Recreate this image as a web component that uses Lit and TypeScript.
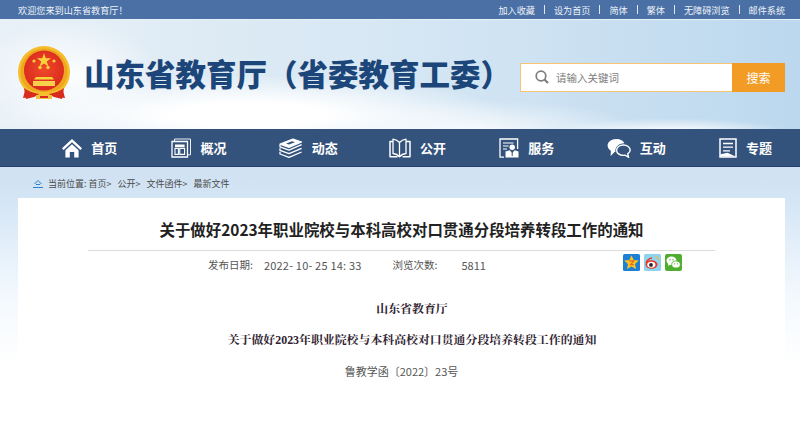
import { LitElement, html, css, svg } from "lit";
import { customElement } from "lit/decorators.js";

const navIcons = {
  home: svg`<svg width="20" height="20" viewBox="0 0 20 20"><path d="M10 1 0 10.2l1.6 1.700L10 4.200l8.400 7.700 1.600-1.700z" fill="#fff"/><path d="M3.400 12.200 10 6.200l6.600 6V19.500h-4.400v-5.400H7.800v5.400H3.400z" fill="#fff"/></svg>`,
  about: svg`<svg width="20" height="20" viewBox="0 0 20 20" fill="none" stroke="#fff"><path d="M1 3.500h15.500V19H1z" stroke-width="1.300"/><path d="M3.500 3V1h16v15.800h-2.600" stroke-width=".9"/><path d="M4 6.500h9.600v2.600H4z" fill="#fff" stroke="none"/><path d="M4 10.400h3.400v6H4zM8.800 10.400h4.800v6H8.800z" stroke-width="1.100"/></svg>`,
  news: svg`<svg width="24" height="20" viewBox="0 0 24 20" fill="none" stroke="#fff" stroke-width="1.300" stroke-linejoin="round"><path d="M1 6.200 14 1l8.600 3L10 9.300z" fill="#fff"/><path d="M1 6.600v2.200l9 3.300 12.600-5.400M1 10.200v2.200l9 3.300 12.600-5.400M1 13.800V16l9 3.300L22.600 14"/><path d="M7 5.500l6-2.300 3 1-6 2.400z" fill="#34537c" stroke="none"/></svg>`,
  open: svg`<svg width="22" height="20" viewBox="0 0 22 20" fill="none" stroke="#fff" stroke-linejoin="round"><path d="M10.500 4.500C9 2.800 6.500 1.500 4 1.200v14.300c2.500.3 5 1.500 6.500 3.200 1.500-1.700 4-2.900 6.500-3.200V1.200c-2.500.3-5 1.600-6.500 3.300zM10.500 4.500v14" stroke-width="1.300"/><path d="M4 3.500H1v15.200h7.500M17 3.500h4v15.200h-7.500" stroke-width="1.500"/></svg>`,
  service: svg`<svg width="20" height="20" viewBox="0 0 20 20" fill="none" stroke="#fff"><path d="M5 19.200H1V1h17.600v10" stroke-width="1.300"/><path d="M4 5h10.500M4 8h5.600M4 11h4" stroke-width="1.200"/><circle cx="13.200" cy="9.200" r="2.700" fill="#fff" stroke="none"/><path d="M6.500 19.500v-6l4.200-1.200 2.500 2.800 2.500-2.800 3.800 1.200v6z" fill="#fff" stroke="none"/><path d="M13.200 13.500v4.600" stroke="#34537c" stroke-width="1"/></svg>`,
  chat: svg`<svg width="24" height="20" viewBox="0 0 24 20"><path d="M9.200 1C4.200 1 .6 4 .6 7.600c0 2.200 1.300 4 3.300 5.200L3.600 18l4-4c.3.1.5 0 .8 0-.6-4.700 2.900-8.500 9-8.700C16.400 2.800 13.300 1 9.200 1z" fill="#fff"/><path d="M16.300 7c-3.800 0-6.700 2.300-6.700 5.200s2.900 5.200 6.700 5.200c.7 0 1.200 0 1.800-.2l3.400 2-.8-3.300c1.500-1 2.500-2.300 2.500-3.800C23.200 9.300 20.100 7 16.300 7z" fill="none" stroke="#fff" stroke-width="1.400"/></svg>`,
  topic: svg`<svg width="18" height="20" viewBox="0 0 18 20" fill="none" stroke="#fff"><path d="M1 1h16v18H1z" stroke-width="1.500"/><path d="M4 5.500h10M4 9.200h10M4 12.800h7" stroke-width="1.300"/><path d="M1.500 18.500v-2.300l7 -1.500 8 3.800z" fill="#fff" stroke="none"/></svg>`,
};

const emblem = svg`<svg width="52" height="56" viewBox="0 0 52 56">
  <defs><radialGradient id="g" cx=".5" cy=".45" r=".6"><stop offset="0" stop-color="#f04a2a"/><stop offset="1" stop-color="#d8261c"/></radialGradient></defs>
  <path d="M9 37 5 52l8-1 3-2h20l3 2 8 1-4-15z" fill="#d92a20"/>
  <circle cx="26" cy="26" r="26" fill="#f6bd2d"/>
  <circle cx="26" cy="26" r="23.500" fill="#eda81f"/>
  <circle cx="26" cy="24.500" r="20" fill="url(#g)"/>
  <path d="M26 7l1.700 5.200h5.400l-4.400 3.200 1.700 5.200-4.400-3.200-4.400 3.200 1.700-5.200-4.400-3.200h5.400z" fill="#f9d33c"/>
  <g fill="#f9d33c"><circle cx="16" cy="15" r="1.600"/><circle cx="36" cy="15" r="1.600"/><circle cx="22" cy="21.500" r="1.700"/><circle cx="30" cy="21.500" r="1.700"/></g>
  <path d="M18 31h16l2 2.500H16z" fill="#f9d33c"/><path d="M15 35h22v5H15z" fill="#f6d04a"/>
  <path d="M6 39c6 6 12 7 20 7s14-1 20-7v3c-6 5-12 7-20 7s-14-2-20-7z" fill="#f6bd2d"/>
  <path d="M6 42l2 11 8-2 5-3c-6-1-11-3-15-6zM46 42l-2 11-8-2-5-3c6-1 11-3 15-6z" fill="#d92a20"/>
  <path d="M18 49h16v4H18z" fill="#f3c23b"/><path d="M22 50h8v2h-8z" fill="#d92a20"/>
</svg>`;

const shareQ = svg`<svg width="17" height="17" viewBox="0 0 17 17"><rect width="17" height="17" rx="1.500" fill="#1c81d6"/><path d="M8.500 1.200l2.200 4.700 5.100.6-3.800 3.500 1 5-4.500-2.500-4.500 2.500 1-5L1.200 6.500l5.100-.6z" fill="#fbc31d"/><path d="M6 6.800h4.800L7.600 10.600h3.200" fill="none" stroke="#e8662a" stroke-width="1.200"/></svg>`;
const shareW = svg`<svg width="17" height="17" viewBox="0 0 17 17"><rect width="17" height="17" rx="1.500" fill="#8fd4ef"/><path d="M11 2.500c2.300 0 3.800 1.700 3.500 4" fill="none" stroke="#f7b63e" stroke-width="1.200"/><ellipse cx="7.500" cy="10.500" rx="6" ry="4.300" fill="#e9342b"/><ellipse cx="7.300" cy="10.800" rx="4.100" ry="3" fill="#fff"/><circle cx="7" cy="10.900" r="1.900" fill="#222"/><path d="M2 9c1-3 4-5 6-5" stroke="#e9342b" stroke-width="1.400" fill="none"/></svg>`;
const shareC = svg`<svg width="17" height="17" viewBox="0 0 17 17"><rect width="17" height="17" rx="2" fill="#4fae2e"/><ellipse cx="6.500" cy="6.700" rx="5" ry="4.200" fill="#fff"/><path d="M3.500 9.500 3 12l2.600-1.500z" fill="#fff"/><ellipse cx="11" cy="10.500" rx="4.300" ry="3.500" fill="#fff" stroke="#4fae2e" stroke-width=".8"/><circle cx="5" cy="5.700" r=".7" fill="#4fae2e"/><circle cx="8" cy="5.700" r=".7" fill="#4fae2e"/><circle cx="9.600" cy="9.800" r=".6" fill="#4fae2e"/><circle cx="12.400" cy="9.800" r=".6" fill="#4fae2e"/></svg>`;

const nav: [keyof typeof navIcons, string][] = [
  ["home", "首页"], ["about", "概况"], ["news", "动态"], ["open", "公开"],
  ["service", "服务"], ["chat", "互动"], ["topic", "专题"],
];
const links = ["加入收藏", "设为首页", "简体", "繁体", "无障碍浏览", "邮件系统"];

@customElement("app-root")
export class AppRoot extends LitElement {
  static styles = css`
    :host { display: block; height: 421px; overflow: hidden; font-family: "Noto Sans CJK SC", sans-serif; background: linear-gradient(#cfe1f2 167px, #d4e5f5 198px, #e8f2fb 260px, #f4f9fe 300px, #fff 365px); }
    .top { height: 19px; background: #4a70a5; border-bottom: 1px solid #e8f0f7; box-sizing: content-box; display: flex; justify-content: space-between; align-items: center; padding: 0 15px 0 18px; color: #eef3f9; font-size: 9.150px; }
    .links { display: flex; align-items: center; gap: 9px; }
    .sep { width: 1px; height: 9px; background: #dfe7f2; }
    .head { height: 109px; display: flex; align-items: center; padding: 0 15px 0 18px; box-sizing: border-box;
      background:
        radial-gradient(ellipse 90px 55px at 70px 55px, rgba(255,255,255,.9), transparent),
        radial-gradient(ellipse 260px 40px at 250px 95px, #fff 30%, transparent),
        radial-gradient(ellipse 120px 14px at 670px 112px, #fff, transparent),
        radial-gradient(ellipse 160px 30px at 480px 110px, rgba(255,255,255,.8), transparent),
        linear-gradient(90deg, #e9f1f8 0%, #dceaf4 30%, #d6e7f4 50%, #bcd8ee 100%);
    }
    .logo { width: 52px; height: 56px; margin-top: -1px; }
    h1 { margin: 0 0 3px 14px; font-size: 30.500px; line-height: 40px; font-weight: 900; color: #1c4679; white-space: nowrap; flex: 1; }
    .search { width: 265px; height: 29px; box-sizing: border-box; border: 1px solid #f7c473; display: flex; background: #fff; margin-top: 5px; flex: none; }
    .field { flex: 1; display: flex; align-items: center; gap: 7px; padding-left: 14px; color: #7d7d7d; font-size: 10.500px; }
    .btn { width: 53px; background: #f29c25; color: #fff; font-size: 12px; display: flex; align-items: center; justify-content: center; margin: -1px -1px -1px 0; height: 29px; }
    nav { height: 38px; background: #34537c; border-bottom: 1px solid #22406a; box-sizing: border-box; display: grid; grid-template-columns: repeat(7, 109.300px); padding-left: 35px; }
    .item { display: flex; align-items: center; justify-content: center; gap: 9px; color: #fff; font-size: 13px; font-weight: 700; }
    .item svg { display: block; }
    .crumb { height: 31px; display: flex; align-items: center; padding: 2px 0 0 33px; box-sizing: border-box; gap: 5px; font-size: 9px; color: #4a4a4a; }
    .crumb span { margin-right: 1px; }
    .card { margin: 0 15px 0 18px; background: #fff; height: 223px; display: flex; flex-direction: column; align-items: center; }
    h2 { margin: 0; padding-top: 20px; height: 53px; box-sizing: border-box; width: 627px; border-bottom: 1px solid #dcdcdc; text-align: center; font-size: 15.450px; line-height: 23px; font-weight: 700; color: #222; white-space: nowrap; }
    .meta { width: 627px; position: relative; height: 27px; display: flex; align-items: center; padding-left: 120px; box-sizing: border-box; font-size: 10.500px; color: #555; }
    .date { margin-left: 11px; font-size: 11px; letter-spacing: .2px; }
    .views { margin-left: 31px; }
    .count { margin-left: 24px; font-size: 11px; }
    .share { display: flex; gap: 4px; position: absolute; left: 535px; top: 3px; }
    .body { width: 100%; text-align: center; font-family: "Liberation Serif", "Noto Serif CJK SC", "Noto Sans CJK SC", serif; font-size: 11.900px; color: #2f2230; padding-top: 16px; }
    .body p { margin: 0; height: 31px; line-height: 31px; }
    .body .b { font-weight: 700; padding-left: 21px; }
    .body .n { color: #555; font-family: "Noto Sans CJK SC", sans-serif; font-size: 11px; }
  `;

  render() {
    return html`
      <div class="top">
        <div>欢迎您来到山东省教育厅！</div>
        <div class="links">
          ${links.map((l, i) => html`${i ? html`<i class="sep"></i>` : ""}<span>${l}</span>`)}
        </div>
      </div>
      <header class="head">
        <div class="logo">${emblem}</div>
        <h1>山东省教育厅（省委教育工委）</h1>
        <div class="search">
          <div class="field">
            <svg width="14" height="14" viewBox="0 0 14 14" fill="none" stroke="#7d7d7d" stroke-width="1.700"><circle cx="6" cy="6" r="4.800"/><path d="M9.500 9.500 13 13" stroke-width="2.200"/></svg>
            请输入关键词
          </div>
          <div class="btn">搜索</div>
        </div>
      </header>
      <nav>
        ${nav.map(([k, t]) => html`<div class="item">${navIcons[k]}<span>${t}</span></div>`)}
      </nav>
      <div class="crumb">
        <svg width="10" height="9" viewBox="0 0 10 9" fill="none" stroke="#2a7fd0"><path d="M1.500 5 5 1.500 8.500 5M3 5.500h4" stroke-width="1"/><path d="M0 8.500h10" stroke-width="1"/></svg>
        <span>当前位置: 首页&gt;</span><span>公开&gt;</span><span>文件函件&gt;</span><span>最新文件</span>
      </div>
      <main class="card">
        <h2>关于做好2023年职业院校与本科高校对口贯通分段培养转段工作的通知</h2>
        <div class="meta">
          <span>发布日期:</span><span class="date">2022- 10- 25 14: 33</span>
          <span class="views">浏览次数:</span><span class="count">5811</span>
          <div class="share">${shareQ}${shareW}${shareC}</div>
        </div>
        <div class="body">
          <p class="b">山东省教育厅</p>
          <p class="b">关于做好2023年职业院校与本科高校对口贯通分段培养转段工作的通知</p>
          <p class="n">鲁教学函〔2022〕23号</p>
        </div>
      </main>
    `;
  }
}
